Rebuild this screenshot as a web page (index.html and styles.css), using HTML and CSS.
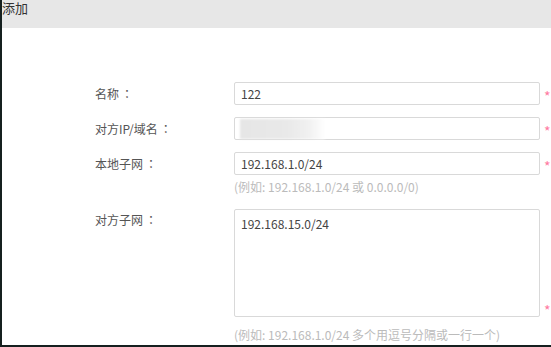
FILE: index.html
```html
<!DOCTYPE html>
<html>
<head>
    <meta charset="UTF-8">
    <title>添加</title>
    <link rel="stylesheet" href="styles.css">
</head>
<body>
    <div class="dialog">
        <div class="dialog-title">添加</div>

        <!-- Tunnel form -->
        <div class="form">
            <div class="label">名称<span class="colon">：</span></div>
            <input class="field" type="text" value="122">
            <span class="req">*</span>

            <div class="label">对方IP/域名<span class="colon">：</span></div>
            <div class="field masked"><span class="blur"></span></div>
            <span class="req">*</span>

            <div class="label">本地子网<span class="colon">：</span></div>
            <input class="field" type="text" value="192.168.1.0/24">
            <span class="req">*</span>
            <div class="hint">(例如: 192.168.1.0/24 或 0.0.0.0/0)</div>

            <div class="label top">对方子网<span class="colon">：</span></div>
            <textarea class="field area">192.168.15.0/24</textarea>
            <span class="req bottom">*</span>
            <div class="hint last">(例如: 192.168.1.0/24 多个用逗号分隔或一行一个)</div>
        </div>
    </div>
</body>
</html>
```

FILE: styles.css
```css
html, body { margin: 0; padding: 0; background: #fff; }
body { font-family: "Noto Sans CJK SC", "Noto Sans", sans-serif; font-size: 12px; color: #555; }
.dialog { width: 549px; height: 345px; border-left: 2px solid #15201f; border-bottom: 2px solid #15201f; background: #fff; overflow: hidden; }
.dialog-title { height: 28px; background: #e7e7e7; font-size: 13px; line-height: 16px; color: #333; }
.form { display: grid; grid-template-columns: 139px 306px 10px; padding: 54px 0 0 93px; row-gap: 12px; align-items: center; }
.label { color: #555; }
.label.top { align-self: start; padding-top: 5px; }
.colon { font-family: "Noto Sans CJK TC", sans-serif; padding-left: 2px; }
.field { box-sizing: border-box; height: 23px; border: 1px solid #d9d9d9; border-radius: 2px; padding: 0 6px; font-family: inherit; font-size: 12px; color: #444; background: #fff; outline: none; margin: 0; }
.masked { display: flex; align-items: center; padding: 0 5px; }
.blur { width: 85px; height: 20px; background: linear-gradient(90deg, #e6e6e6 0, #e9e9e9 55%, #f0f0f0 80%, #fff 100%); filter: blur(1px); }
.area { height: 108px; resize: none; padding: 5px 6px 3px; line-height: 17px; margin-top: 3px; }
.req { color: #ff7aa2; font-size: 14px; line-height: 14px; padding: 4px 0 0 4px; }
.req.bottom { align-self: end; padding-bottom: 0; }
.hint { grid-column: 2 / 4; color: #bbb; margin-top: -7px; line-height: 14px; }
.hint.last { margin-top: -1px; }
```
